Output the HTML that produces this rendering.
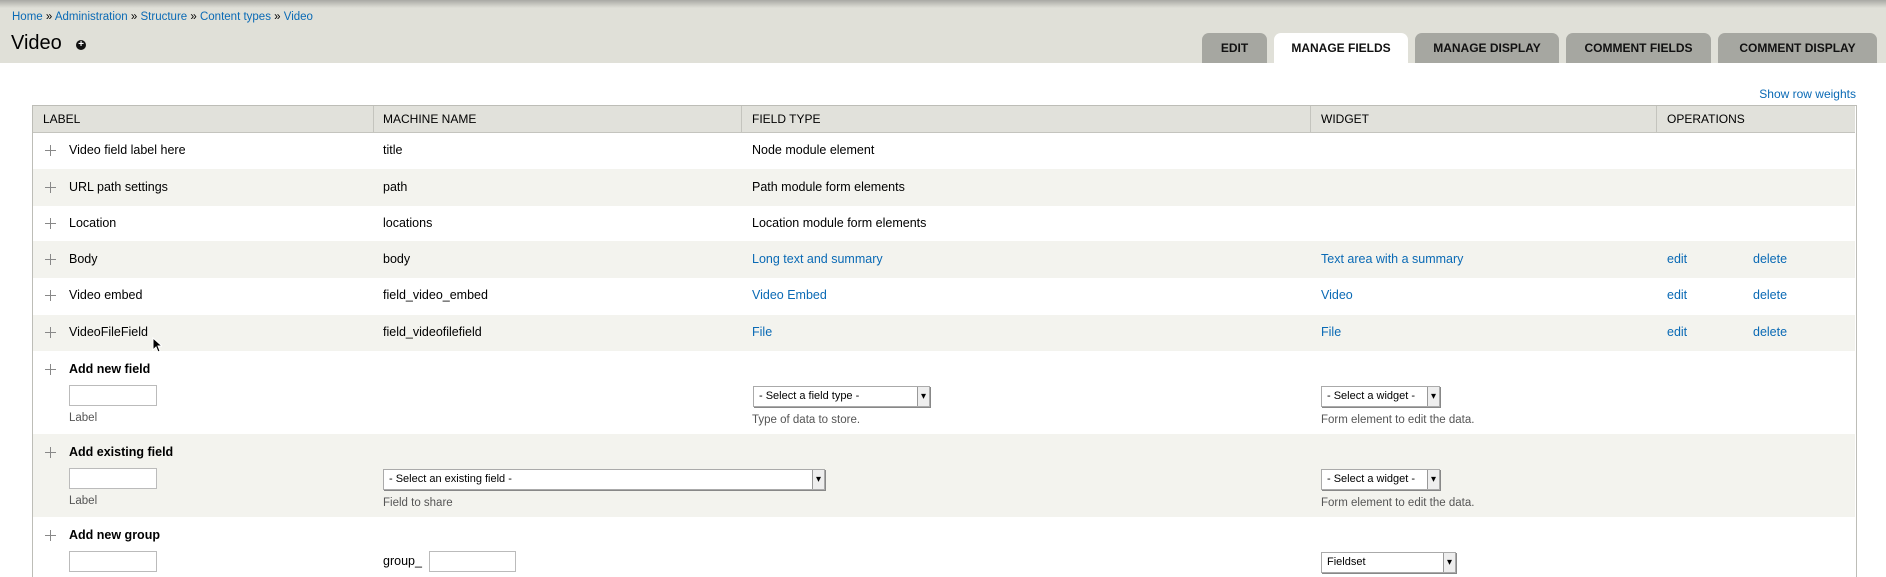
<!DOCTYPE html>
<html><head><meta charset="utf-8"><style>
*{margin:0;padding:0;box-sizing:border-box}
html,body{width:1886px;height:577px;overflow:hidden}
body{background:#fff;font-family:"Liberation Sans",sans-serif;font-size:12.5px;color:#000;position:relative}
.a{position:absolute;white-space:nowrap}
a,.l{color:#0a6ab5;text-decoration:none}
#hdr{position:absolute;left:0;top:0;width:1886px;height:63px;background:#e0e0d8}
#shadow{position:absolute;left:0;top:0;width:1886px;height:8px;background:linear-gradient(#a9a9a4,#e0e0d8)}
.tab{position:absolute;top:33px;height:30px;background:#a6a7a1;border-radius:7px 7px 0 0;font-size:12px;font-weight:bold;color:#111;text-align:center;line-height:31px}
.tab.on{background:#fff}
.row{position:absolute;left:33px;width:1822px}
.g{background:#f3f3ee}
.drag{position:absolute;width:11px;height:11px}
.drag:before{content:"";position:absolute;left:5px;top:0;width:1px;height:11px;background:#888}
.drag:after{content:"";position:absolute;left:0;top:5px;width:11px;height:1px;background:#888}
.inp{position:absolute;height:21px;border:1px solid #bbb;background:#fff}
.sel{position:absolute;height:21px;border:1px solid #aaa;background:#fff;font-size:11px;line-height:19px;padding-left:5px;box-shadow:1px 1px 0 #888}
.sel:after{content:"▾";position:absolute;right:0;top:0;width:11px;height:19px;background:#eee;border-left:1px solid #999;font-size:10px;line-height:19px;text-align:center}
.desc{font-size:11.5px;color:#555}
</style></head><body>
<div id="hdr"></div><div id="shadow"></div>
<div class="a" style="left:12px;top:11px;font-size:11.5px"><a>Home</a> » <a>Administration</a> » <a>Structure</a> » <a>Content types</a> » <a>Video</a></div>
<div class="a" style="left:11px;top:32px;font-size:20px">Video</div>
<div class="a" style="left:76px;top:40px;width:10px;height:10px;border-radius:50%;background:#111;color:#fff;font-size:10px;line-height:10px;text-align:center;font-weight:bold">+</div>
<div class="tab" style="left:1202px;width:65px">EDIT</div>
<div class="tab on" style="left:1274px;width:134px">MANAGE FIELDS</div>
<div class="tab" style="left:1415px;width:144px">MANAGE DISPLAY</div>
<div class="tab" style="left:1566px;width:145px">COMMENT FIELDS</div>
<div class="tab" style="left:1718px;width:159px">COMMENT DISPLAY</div>
<div class="a l" style="right:30px;top:87px;font-size:12px">Show row weights</div>

<div class="a" style="left:32px;top:105px;width:1825px;height:500px;border:1px solid #bdbdb7"></div>
<div class="row" style="top:106px;height:27px;background:#e1e1db;border-bottom:1px solid #c4c4be"></div>
<div class="a" style="left:373px;top:106px;width:1px;height:26px;background:#c4c4be"></div>
<div class="a" style="left:741px;top:106px;width:1px;height:26px;background:#c4c4be"></div>
<div class="a" style="left:1310px;top:106px;width:1px;height:26px;background:#c4c4be"></div>
<div class="a" style="left:1656px;top:106px;width:1px;height:26px;background:#c4c4be"></div>
<div class="a" style="left:43px;top:112px;font-size:12px">LABEL</div>
<div class="a" style="left:383px;top:112px;font-size:12px">MACHINE NAME</div>
<div class="a" style="left:752px;top:112px;font-size:12px">FIELD TYPE</div>
<div class="a" style="left:1321px;top:112px;font-size:12px">WIDGET</div>
<div class="a" style="left:1667px;top:112px;font-size:12px">OPERATIONS</div>

<div class="row g" style="top:169px;height:37px"></div>
<div class="row g" style="top:241px;height:37px"></div>
<div class="row g" style="top:315px;height:36px"></div>
<div class="row g" style="top:434px;height:83px"></div>

<div class="drag" style="left:45px;top:145px"></div><div class="a" style="left:69px;top:143px">Video field label here</div><div class="a" style="left:383px;top:143px">title</div><div class="a" style="left:752px;top:143px">Node module element</div>
<div class="drag" style="left:45px;top:182px"></div><div class="a" style="left:69px;top:180px">URL path settings</div><div class="a" style="left:383px;top:180px">path</div><div class="a" style="left:752px;top:180px">Path module form elements</div>
<div class="drag" style="left:45px;top:218px"></div><div class="a" style="left:69px;top:216px">Location</div><div class="a" style="left:383px;top:216px">locations</div><div class="a" style="left:752px;top:216px">Location module form elements</div>
<div class="drag" style="left:45px;top:254px"></div><div class="a" style="left:69px;top:252px">Body</div><div class="a" style="left:383px;top:252px">body</div><div class="a l" style="left:752px;top:252px">Long text and summary</div><div class="a l" style="left:1321px;top:252px">Text area with a summary</div><div class="a l" style="left:1667px;top:252px">edit</div><div class="a l" style="left:1753px;top:252px">delete</div>
<div class="drag" style="left:45px;top:290px"></div><div class="a" style="left:69px;top:288px">Video embed</div><div class="a" style="left:383px;top:288px">field_video_embed</div><div class="a l" style="left:752px;top:288px">Video Embed</div><div class="a l" style="left:1321px;top:288px">Video</div><div class="a l" style="left:1667px;top:288px">edit</div><div class="a l" style="left:1753px;top:288px">delete</div>
<div class="drag" style="left:45px;top:327px"></div><div class="a" style="left:69px;top:325px">VideoFileField</div><div class="a" style="left:383px;top:325px">field_videofilefield</div><div class="a l" style="left:752px;top:325px">File</div><div class="a l" style="left:1321px;top:325px">File</div><div class="a l" style="left:1667px;top:325px">edit</div><div class="a l" style="left:1753px;top:325px">delete</div>
<svg class="a" style="left:152px;top:337px" width="10" height="16" viewBox="0 0 10 16"><path d="M1 1 L1 13 L4 10 L6 15 L8 14 L6 9 L10 9 Z" fill="#000" stroke="#fff" stroke-width="1"/></svg>

<div class="drag" style="left:45px;top:364px"></div><div class="a" style="left:69px;top:362px;font-weight:bold">Add new field</div>
<div class="inp" style="left:69px;top:385px;width:88px"></div><div class="a desc" style="left:69px;top:412px">Label</div>
<div class="sel" style="left:753px;top:386px;width:177px">- Select a field type -</div><div class="a desc" style="left:752px;top:414px">Type of data to store.</div>
<div class="sel" style="left:1321px;top:386px;width:119px">- Select a widget -</div><div class="a desc" style="left:1321px;top:414px">Form element to edit the data.</div>

<div class="drag" style="left:45px;top:447px"></div><div class="a" style="left:69px;top:445px;font-weight:bold">Add existing field</div>
<div class="inp" style="left:69px;top:468px;width:88px"></div><div class="a desc" style="left:69px;top:495px">Label</div>
<div class="sel" style="left:383px;top:469px;width:442px">- Select an existing field -</div><div class="a desc" style="left:383px;top:497px">Field to share</div>
<div class="sel" style="left:1321px;top:469px;width:119px">- Select a widget -</div><div class="a desc" style="left:1321px;top:497px">Form element to edit the data.</div>

<div class="drag" style="left:45px;top:530px"></div><div class="a" style="left:69px;top:528px;font-weight:bold">Add new group</div>
<div class="inp" style="left:69px;top:551px;width:88px"></div>
<div class="a" style="left:383px;top:554px">group_</div><div class="inp" style="left:429px;top:551px;width:87px"></div>
<div class="sel" style="left:1321px;top:552px;width:135px">Fieldset</div>
</body></html>
